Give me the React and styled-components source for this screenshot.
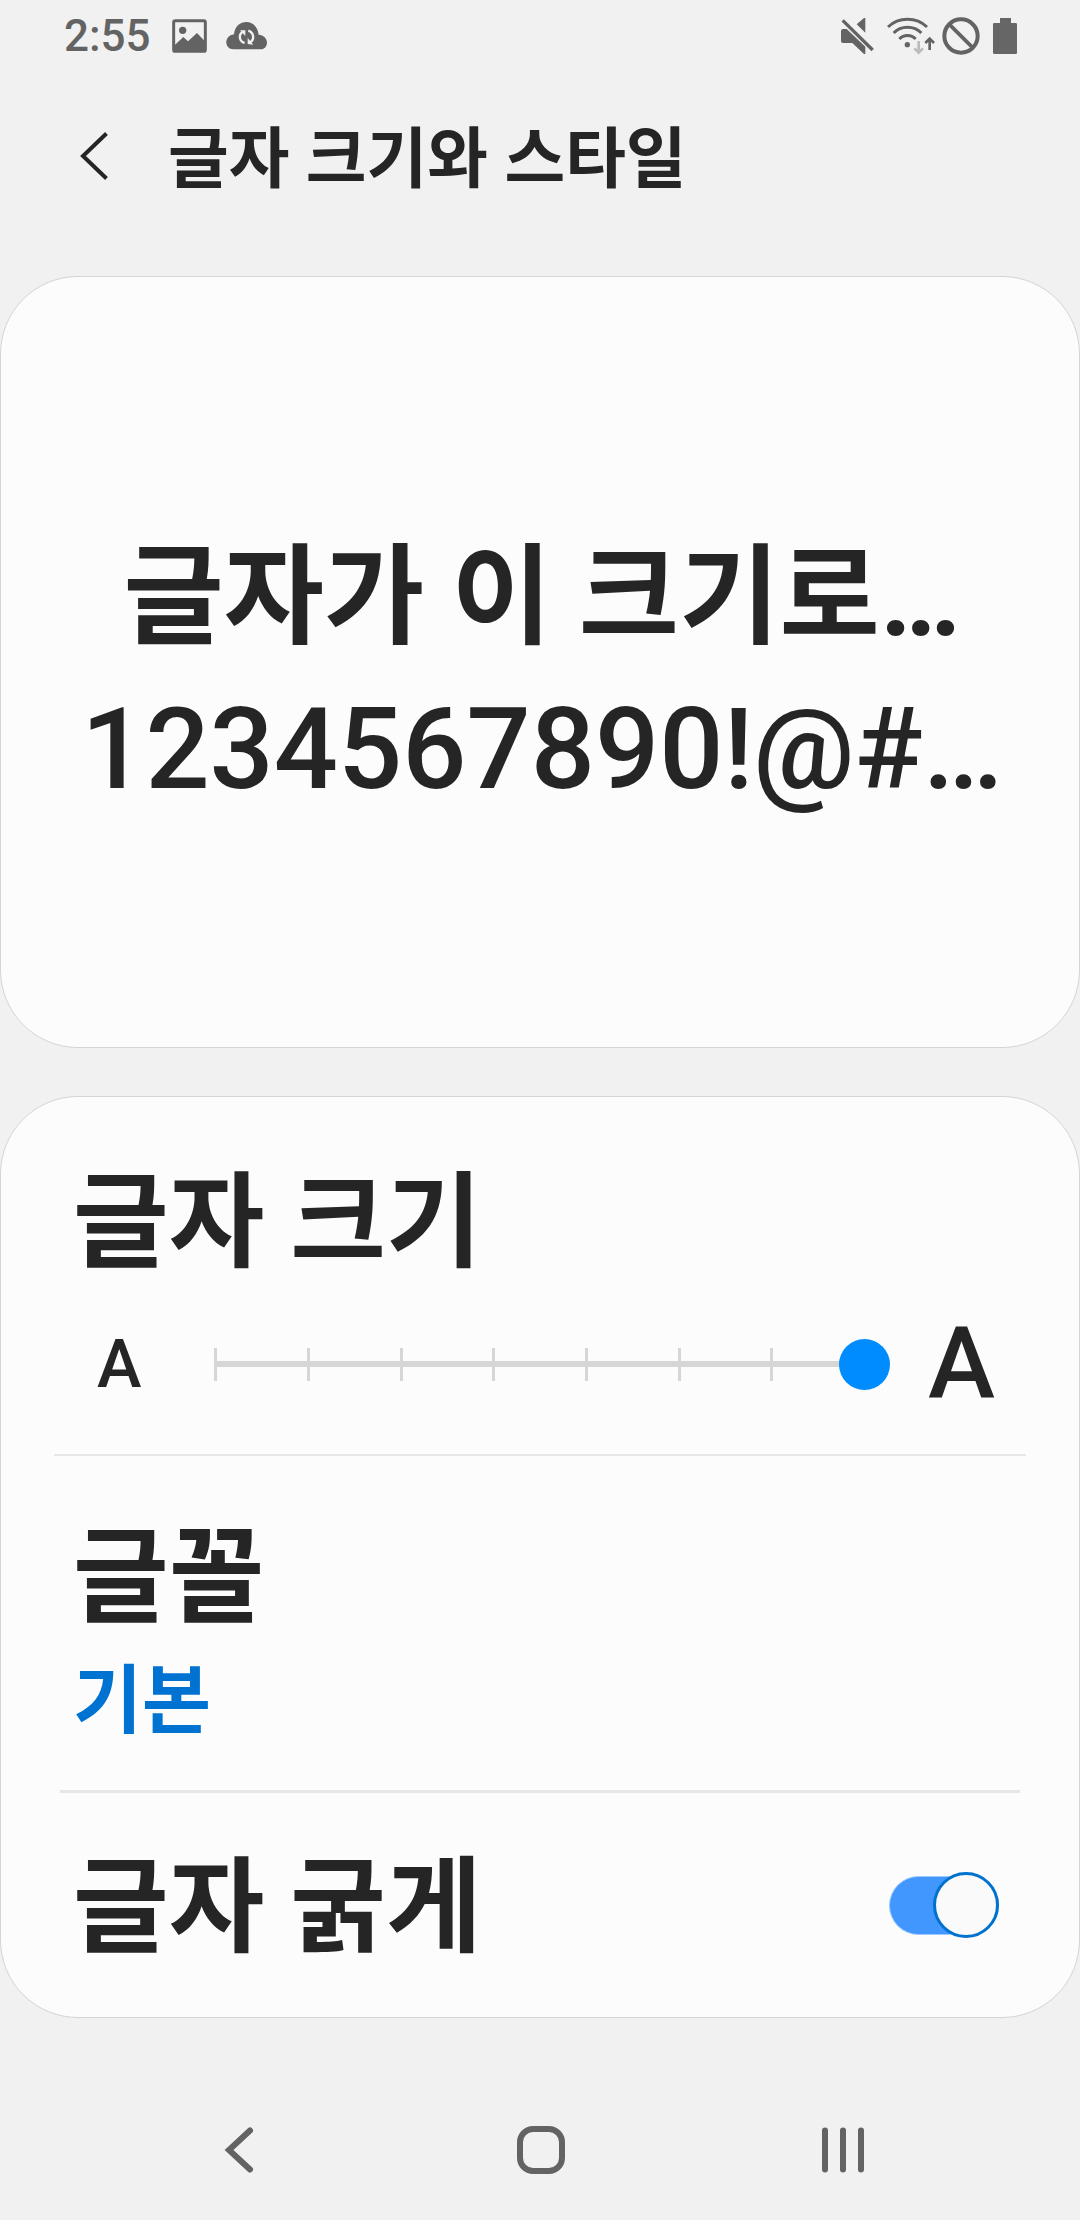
import React, { useState } from 'react';
import styled, { createGlobalStyle } from 'styled-components';

const STEPS = 8;

const App = () => {
  const [size, setSize] = useState(STEPS - 1);
  const [bold, setBold] = useState(true);

  return (
    <>
      <GlobalStyle />
      <ScreenStyled>
        <StatusBar />
        <HeaderStyled>
          <BackButton type='button' aria-label='뒤로'>
            <svg width='28' height='48' viewBox='0 0 28 48' fill='none'>
              <path d='M26.5 1.5 L3 24 L26.5 46.5' stroke='#252525' strokeWidth='4' />
            </svg>
          </BackButton>
          <h1>글자 크기와 스타일</h1>
        </HeaderStyled>
        <main>
          <PreviewCard>
            <PreviewLine $size={109} $weight={700}>
              글자가 이 크기로…
            </PreviewLine>
            <PreviewLine $size={113} $weight={500}>
              1234567890!@#…
            </PreviewLine>
          </PreviewCard>
          <SettingsCard>
            <SizeRow>
              <RowTitle as='label' htmlFor='font-size'>
                글자 크기
              </RowTitle>
              <SliderRow>
                <Letter $size={67}>A</Letter>
                <SliderBox>
                  <Ticks>
                    {Array.from({ length: STEPS }, (_, i) => (
                      <Tick key={i} />
                    ))}
                  </Ticks>
                  <Range
                    id='font-size'
                    type='range'
                    min='0'
                    max={STEPS - 1}
                    value={size}
                    onChange={(e) => setSize(Number(e.target.value))}
                  />
                </SliderBox>
                <Letter $size={101}>A</Letter>
              </SliderRow>
            </SizeRow>
            <Divider $inset={53} $weight={2} />
            <FontRow type='button'>
              <RowTitle>글꼴</RowTitle>
              <RowValue>기본</RowValue>
            </FontRow>
            <Divider $inset={59} $weight={3} />
            <BoldRow>
              <RowTitle as='label' htmlFor='font-bold'>
                글자 굵게
              </RowTitle>
              <Switch
                id='font-bold'
                type='checkbox'
                role='switch'
                checked={bold}
                onChange={(e) => setBold(e.target.checked)}
              />
            </BoldRow>
          </SettingsCard>
        </main>
        <NavBar />
      </ScreenStyled>
    </>
  );
};

const StatusBar = () => (
  <StatusBarStyled>
    <div className='left'>
      <time>2:55</time>
      <svg width='35' height='34' viewBox='0 0 105 102'>
        <rect x='5' y='5' width='95' height='92' rx='5' fill='none' stroke='#636363' strokeWidth='9' />
        <circle cx='32' cy='34' r='11' fill='#636363' />
        <path d='M6 80 L34 54 L48 67 L75 42 L100 68 V97 H6 Z' fill='#636363' />
      </svg>
      <svg className='cloud' width='41' height='28' viewBox='0 0 123 84'>
        <path
          d='M22 82 C-5 82 -8 42 24 37 C28 -10 92 -14 98 38 C131 41 130 82 102 82 Z'
          fill='#636363'
        />
        <g fill='none' stroke='#f1f1f1' strokeWidth='7'>
          <path d='M56 63 C39 58 37 38 50 29' />
          <path d='M67 26 C84 32 86 52 73 61' />
        </g>
        <path d='M42 25 H58 V42 Z M65 48 V66 L82 68 Z' fill='#f1f1f1' />
      </svg>
    </div>
    <div className='right'>
      <svg width='33' height='36' viewBox='0 0 99 108'>
        <path d='M0 39 Q0 33 6 33 H17 L73 86 V108 H69 L34 75 H6 Q0 75 0 69 Z' fill='#636363' />
        <path d='M73 0 V44 L47 19 L69 0 Z' fill='#636363' />
        <path d='M5 7 L95 96' stroke='#636363' strokeWidth='10' />
      </svg>
      <svg className='wifi' width='48' height='38' viewBox='0 0 144 114'>
        <g fill='none' stroke='#636363' strokeWidth='9'>
          <path d='M3 30 C35 -1 88 -1 120 30' />
          <path d='M20 48 C42 25 81 25 103 48' />
          <path d='M37 66 C50 52 73 52 86 66' />
        </g>
        <circle cx='61' cy='83' r='8' fill='#636363' />
        <path d='M95 72 V107 M82 94 L95 107 L108 94' fill='none' stroke='#bcbcbc' strokeWidth='8' />
        <path d='M128 99 V65 M115 78 L128 65 L141 78' fill='none' stroke='#636363' strokeWidth='8' />
      </svg>
      <svg width='38' height='38' viewBox='0 0 114 114' fill='none' stroke='#636363'>
        <circle cx='57' cy='57' r='50' strokeWidth='12' />
        <path d='M22 22 L92 92' strokeWidth='11' />
      </svg>
      <svg className='battery' width='24' height='36' viewBox='0 0 72 108'>
        <path
          d='M21 0 H54 V15 H68 Q72 15 72 19 V104 Q72 108 68 108 H4 Q0 108 0 104 V19 Q0 15 4 15 H21 Z'
          fill='#666'
        />
      </svg>
    </div>
  </StatusBarStyled>
);

const NavBar = () => (
  <NavBarStyled>
    <button type='button' aria-label='뒤로'>
      <svg width='48' height='48' viewBox='0 0 48 48' fill='none'>
        <path
          d='M35 4.5 L14 24 L35 43.5'
          stroke='#636363'
          strokeWidth='6'
          strokeLinecap='round'
        />
      </svg>
    </button>
    <button type='button' aria-label='홈'>
      <svg width='48' height='48' viewBox='0 0 48 48' fill='none'>
        <rect x='3' y='3' width='42' height='42' rx='13' stroke='#636363' strokeWidth='6' />
      </svg>
    </button>
    <button type='button' aria-label='최근 앱'>
      <svg width='48' height='48' viewBox='0 0 48 48'>
        <path
          d='M6 4.5 V43.5 M24 4.5 V43.5 M42 4.5 V43.5'
          stroke='#636363'
          strokeWidth='6'
          strokeLinecap='round'
        />
      </svg>
    </button>
  </NavBarStyled>
);

const GlobalStyle = createGlobalStyle`
  *,
  *::before,
  *::after {
    box-sizing: border-box;
    margin: 0;
    padding: 0;
  }

  body {
    background: #f1f1f1;
    color: #252525;
    font-family: Roboto, 'Noto Sans CJK KR', sans-serif;
    font-weight: 500;
  }

  button {
    background: none;
    border: none;
    color: inherit;
    font: inherit;
    cursor: pointer;
  }

  svg {
    display: block;
    flex: none;
  }
`;

const ScreenStyled = styled.div`
  display: flex;
  flex-direction: column;
  min-height: 100vh;
`;

const StatusBarStyled = styled.div`
  display: flex;
  justify-content: space-between;
  align-items: center;
  height: 72px;
  padding: 0 63px 0 64px;

  .left,
  .right {
    display: flex;
    align-items: center;
  }

  time {
    color: #636363;
    font-size: 44px;
    line-height: 72px;
    margin-right: 21px;
  }

  .cloud {
    margin-left: 19px;
  }

  .wifi {
    margin: 0 7px 0 13px;
  }

  .battery {
    margin-left: 13px;
  }
`;

const HeaderStyled = styled.header`
  display: flex;
  align-items: center;
  height: 168px;
  margin-bottom: 36px;

  h1 {
    padding-top: 8px;
    font-size: 66px;
    font-weight: 700;
    line-height: 96px;
  }
`;

const BackButton = styled.button`
  padding: 24px 60px 24px 80px;
`;

const Card = styled.section`
  background: #fcfcfc;
  border: 1px solid #d4d4d4;
  border-radius: 78px;
`;

const PreviewCard = styled(Card)`
  padding: 245px 20px 221px 24px;
  text-align: center;
`;

const PreviewLine = styled.p`
  font-size: ${({ $size }) => $size}px;
  font-weight: ${({ $weight }) => $weight};
  line-height: 152px;
  white-space: nowrap;
`;

const SettingsCard = styled(Card)`
  margin-top: 48px;
`;

const RowTitle = styled.span`
  display: block;
  padding-top: 8px;
  font-size: 104px;
  font-weight: 700;
  line-height: 144px;
`;

const RowValue = styled.span`
  display: block;
  color: #0072d2;
  font-size: 75px;
  font-weight: 700;
  line-height: 100px;
`;

const SizeRow = styled.div`
  padding: 47px 72px 26px;
`;

const SliderRow = styled.div`
  display: flex;
  align-items: center;
  justify-content: space-between;
  gap: 36px;
  margin-top: 4px;
  padding: 0 12px 0 24px;
`;

const Letter = styled.span`
  font-size: ${({ $size }) => $size}px;
  line-height: 128px;
`;

const SliderBox = styled.div`
  display: grid;
  flex: 1;
  align-items: center;
  margin: 0 2px 0 13px;

  > * {
    grid-area: 1 / 1;
  }
`;

const Ticks = styled.div`
  display: flex;
  justify-content: space-between;
  margin: 0 24px;
  background: linear-gradient(#d6d6d6, #d6d6d6) center / 100% 6px no-repeat;
`;

const Tick = styled.span`
  width: 3px;
  height: 33px;
  background: #d6d6d6;
`;

const Range = styled.input`
  appearance: none;
  width: 100%;
  height: 51px;
  background: none;
  cursor: pointer;

  &::-webkit-slider-thumb {
    appearance: none;
    width: 51px;
    height: 51px;
    border-radius: 50%;
    background: #008cff;
  }
`;

const Divider = styled.hr`
  border: none;
  height: ${({ $weight }) => $weight}px;
  margin: 0 ${({ $inset }) => $inset}px;
  background: #e6e6e6;
`;

const FontRow = styled.button`
  display: block;
  width: 100%;
  padding: 43px 72px 39px;
  text-align: left;
`;

const BoldRow = styled.div`
  display: flex;
  align-items: center;
  justify-content: space-between;
  padding: 36px 80px 36px 72px;
`;

const Switch = styled.input`
  appearance: none;
  display: grid;
  align-items: center;
  width: 110px;
  height: 66px;
  cursor: pointer;

  &::before,
  &::after {
    content: '';
    grid-area: 1 / 1;
  }

  &::before {
    height: 59px;
    border: 1px solid #9ccaff;
    border-radius: 30px;
    background: #b5b5b5;
  }

  &::after {
    width: 66px;
    height: 66px;
    border: 3px solid #0072ce;
    border-radius: 50%;
    background: #fafafa;
  }

  &:checked::before {
    background: #4297ff;
  }

  &:checked::after {
    justify-self: end;
  }
`;

const NavBarStyled = styled.nav`
  display: flex;
  justify-content: space-around;
  align-items: center;
  height: 140px;
  margin-top: auto;
  padding: 0 86px 0 88px;

  button {
    padding: 24px;
  }
`;

export default App;
